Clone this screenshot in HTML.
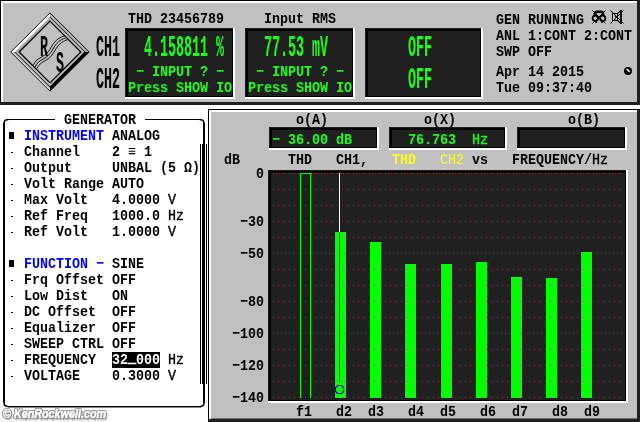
<!DOCTYPE html>
<html lang="en"><head><meta charset="utf-8"><title>R&amp;S Audio Analyzer</title>
<style>
html,body{margin:0;padding:0;background:#fff;}
body{width:640px;height:422px;position:relative;overflow:hidden;}
svg{position:absolute;left:0;top:0;}
#txt{position:absolute;left:0;top:0;width:640px;height:422px;will-change:transform;}
.t{position:absolute;white-space:pre;font-family:"Liberation Mono","DejaVu Sans Mono",monospace;font-size:13.33px;line-height:20px;height:20px;margin-top:-13.5px;font-weight:bold;transform:scaleY(1.13);transform-origin:0 13.5px;letter-spacing:0;}
.t u{text-decoration:none;font-weight:normal;-webkit-text-stroke:0.35px currentColor;}
.t b.hl{color:#fff;font-weight:bold;}
.t b.hl i{font-style:normal;position:relative;top:-1.6px;-webkit-text-stroke:0.7px #fff;}
.tall{transform:scaleY(2.28);}
.wm{position:absolute;left:3px;top:407px;font:italic bold 12px "Liberation Sans",sans-serif;color:#fff;-webkit-text-stroke:0.5px #fff;transform:scaleX(0.897);transform-origin:0 0;text-shadow:1px 0 0 #808080,-1px 0 0 #8a8a8a,0 1px 0 #808080,0 -1px 0 #8a8a8a,1px 1px 0 #888,-1px -1px 0 #999,1px -1px 0 #999,-1px 1px 0 #999,2px 2px 2px #999,1px 2px 2px #aaa;white-space:nowrap;}
</style></head><body>
<svg width="640" height="422" viewBox="0 0 640 422" shape-rendering="crispEdges">
<rect x="0" y="0" width="640" height="105" fill="#202020"/>
<rect x="0" y="0" width="637" height="102" fill="#000"/>
<rect x="1" y="1" width="636" height="101" fill="#fff"/>
<rect x="3" y="3" width="634" height="99" fill="#c0c0c0"/>
<rect x="125" y="28" width="110" height="71" fill="#fff"/>
<rect x="125" y="28" width="108" height="69" fill="#1c1c1c"/>
<rect x="126" y="29" width="107" height="68" fill="#000"/>
<rect x="128" y="31" width="104" height="65" fill="#202020"/>
<rect x="245" y="28" width="110" height="71" fill="#fff"/>
<rect x="245" y="28" width="108" height="69" fill="#1c1c1c"/>
<rect x="246" y="29" width="107" height="68" fill="#000"/>
<rect x="248" y="31" width="104" height="65" fill="#202020"/>
<rect x="365" y="28" width="118" height="71" fill="#fff"/>
<rect x="365" y="28" width="116" height="69" fill="#1c1c1c"/>
<rect x="366" y="29" width="115" height="68" fill="#000"/>
<rect x="368" y="31" width="112" height="65" fill="#202020"/>
<g shape-rendering="auto">
<polygon points="50,12.399999999999999 89.6,52 50,91.6 10.399999999999999,52" fill="#000"/>
<polygon points="50,13.5 88.5,52 50,90.5 11.5,52" fill="#c0c0c0"/>
<polygon points="11.399999999999999,52 50,13.399999999999999 50,17.200000000000003 15.200000000000003,52" fill="#fff"/>
<polygon points="15.200000000000003,52 50,17.200000000000003 50,20.5 18.5,52" fill="#a6a6a6"/>
<polygon points="88.9,52 50,90.9 50,86.3 84.3,52" fill="#000"/>
<polygon points="85.6,52 50,16.4 50,17.4 84.6,52" fill="#000"/>
<polygon points="14.399999999999999,52 50,87.6 50,86.6 15.399999999999999,52" fill="#000"/>
<polygon points="11.600000000000001,52 50,90.4 50,89.4 12.600000000000001,52" fill="#e8e8e8"/>
<polygon points="50,21.1 80.9,52 50,82.9 19.1,52" fill="#c0c0c0" stroke="#000" stroke-width="1.3"/>
</g>
<path d="M33.2,65.2 C35.2,60.7 38.2,58.7 42.2,56.7 C46.2,54.7 48.7,51.7 51.2,47.2 C54.2,41.7 58.2,37.7 63.7,36.2" fill="none" stroke="#000" stroke-width="0.9" shape-rendering="auto"/>
<path d="M35,67 C37,62.5 40,60.5 44,58.5 C48,56.5 50.5,53.5 53,49 C56,43.5 60,39.5 65.5,38" fill="none" stroke="#000" stroke-width="0.9" shape-rendering="auto"/>
<path d="M36.8,68.8 C38.8,64.3 41.8,62.3 45.8,60.3 C49.8,58.3 52.3,55.3 54.8,50.8 C57.8,45.3 61.8,41.3 67.3,39.8" fill="none" stroke="#000" stroke-width="0.9" shape-rendering="auto"/>
<g stroke="#000" stroke-width="1" fill="none" shape-rendering="auto"><path d="M592.5,10.5 L605.5,23.5 M605.5,10.5 L592.5,23.5"/><path d="M594.8,16 L594.8,14 Q595,11.8 597.5,11.8 L600.5,11.8 Q603,11.8 603.2,14 L603.2,16" stroke-width="2.4"/><circle cx="595.3" cy="18.3" r="2.7" stroke-width="1.7"/><circle cx="602.7" cy="18.3" r="2.7" stroke-width="1.7"/><path d="M595.5,21 l1,1.8 M602.5,21 l-1,1.8" stroke-width="1.6"/><rect x="598.3" y="16.3" width="1.6" height="1.6" fill="#000" stroke="none"/><path d="M610.5,10.5 L623.5,23.5 M623.5,10.5 L610.5,23.5"/><rect x="612.5" y="13.5" width="5" height="7" stroke-width="1"/><path d="M617.5,13.5 L621,10.5 M617.5,20.5 L621,23.5" stroke-width="1.1"/><path d="M621,10 V24" stroke-width="1.8"/><rect x="615" y="16" width="1.6" height="1.6" fill="#000" stroke="none"/></g>
<g shape-rendering="auto"><circle cx="628" cy="71" r="4" fill="#000"/><path d="M626.6,68.8 l3.2,3.2" stroke="#e8e8e8" stroke-width="1.7"/></g>
<rect x="3" y="123" width="2" height="280" fill="#000"/>
<rect x="203" y="123" width="2" height="280" fill="#000"/>
<rect x="8" y="119" width="47" height="1" fill="#000"/>
<rect x="145" y="119" width="56" height="1" fill="#000"/>
<rect x="8" y="406" width="193" height="1" fill="#000"/>
<rect x="8" y="407" width="193" height="1" fill="#8a8a8a"/>
<g fill="none" stroke="#000" stroke-width="1.5" shape-rendering="auto"><path d="M4,123.5 Q4,119.6 8.5,119.6"/><path d="M199.5,119.6 Q204,119.6 204,123.5"/><path d="M4,402.5 Q4,406.6 8.5,406.6"/><path d="M199.5,406.6 Q204,406.6 204,402.5"/></g>
<rect x="9" y="132" width="5" height="7" fill="#000"/>
<rect x="11" y="152" width="2" height="1" fill="#000"/>
<rect x="11" y="168" width="2" height="1" fill="#000"/>
<rect x="11" y="184" width="2" height="1" fill="#000"/>
<rect x="11" y="200" width="2" height="1" fill="#000"/>
<rect x="11" y="216" width="2" height="1" fill="#000"/>
<rect x="11" y="232" width="2" height="1" fill="#000"/>
<rect x="9" y="260" width="5" height="7" fill="#000"/>
<rect x="11" y="280" width="2" height="1" fill="#000"/>
<rect x="11" y="296" width="2" height="1" fill="#000"/>
<rect x="11" y="312" width="2" height="1" fill="#000"/>
<rect x="11" y="328" width="2" height="1" fill="#000"/>
<rect x="11" y="344" width="2" height="1" fill="#000"/>
<rect x="11" y="360" width="2" height="1" fill="#000"/>
<rect x="11" y="376" width="2" height="1" fill="#000"/>
<rect x="200" y="144" width="1" height="240" fill="#000"/>
<rect x="202" y="144" width="3" height="240" fill="#000"/>
<rect x="206" y="144" width="1" height="240" fill="#000"/>
<rect x="112" y="352" width="48" height="16" fill="#000"/>
<rect x="208" y="109" width="432" height="313" fill="#202020"/>
<rect x="208" y="109" width="1" height="313" fill="#000"/>
<rect x="208" y="109" width="431" height="1" fill="#000"/>
<rect x="209" y="110" width="428" height="309" fill="#fff"/>
<rect x="211" y="112" width="426" height="306" fill="#c0c0c0"/>
<rect x="211" y="418" width="426" height="1" fill="#707070"/>
<rect x="269" y="127" width="110" height="23" fill="#fff"/>
<rect x="269" y="127" width="108" height="21" fill="#1c1c1c"/>
<rect x="270" y="128" width="107" height="20" fill="#000"/>
<rect x="272" y="130" width="104" height="17" fill="#202020"/>
<rect x="389" y="127" width="118" height="23" fill="#fff"/>
<rect x="389" y="127" width="116" height="21" fill="#1c1c1c"/>
<rect x="390" y="128" width="115" height="20" fill="#000"/>
<rect x="392" y="130" width="112" height="17" fill="#202020"/>
<rect x="517" y="127" width="110" height="23" fill="#fff"/>
<rect x="517" y="127" width="108" height="21" fill="#1c1c1c"/>
<rect x="518" y="128" width="107" height="20" fill="#000"/>
<rect x="520" y="130" width="104" height="17" fill="#202020"/>
<rect x="268" y="170" width="360" height="233" fill="#fff"/>
<rect x="268" y="170" width="358" height="231" fill="#1c1c1c"/>
<rect x="269" y="171" width="357" height="230" fill="#000"/>
<rect x="271" y="173" width="354" height="227" fill="#202020"/>
<defs><pattern id="pa" x="273" y="0" width="16" height="1" patternUnits="userSpaceOnUse"><rect x="0" width="1" height="1" fill="#f00"/><rect x="5" width="1" height="1" fill="#f00"/><rect x="10" width="1" height="1" fill="#f00"/></pattern><pattern id="pb" x="273" y="0" width="16" height="1" patternUnits="userSpaceOnUse"><rect x="0" width="1" height="1" fill="#f00"/><rect x="4" width="1" height="1" fill="#f00"/><rect x="8" width="1" height="1" fill="#f00"/><rect x="12" width="1" height="1" fill="#f00"/></pattern><pattern id="pc" x="273" y="0" width="16" height="1" patternUnits="userSpaceOnUse"><rect x="0" width="1" height="1" fill="#f00"/><rect x="3" width="1" height="1" fill="#f00"/><rect x="6" width="1" height="1" fill="#f00"/><rect x="9" width="1" height="1" fill="#f00"/><rect x="12" width="1" height="1" fill="#f00"/></pattern><pattern id="ma" x="273" y="0" width="16" height="1" patternUnits="userSpaceOnUse"><rect x="0" width="1" height="1" fill="#e838e8"/><rect x="5" width="1" height="1" fill="#e838e8"/><rect x="10" width="1" height="1" fill="#e838e8"/></pattern><pattern id="mb" x="273" y="0" width="16" height="1" patternUnits="userSpaceOnUse"><rect x="0" width="1" height="1" fill="#e838e8"/><rect x="4" width="1" height="1" fill="#e838e8"/><rect x="8" width="1" height="1" fill="#e838e8"/><rect x="12" width="1" height="1" fill="#e838e8"/></pattern></defs>
<rect x="273" y="173" width="351" height="1" fill="url(#pc)"/>
<rect x="273" y="189" width="351" height="1" fill="url(#pa)"/>
<rect x="273" y="205" width="351" height="1" fill="url(#pa)"/>
<rect x="273" y="221" width="351" height="1" fill="url(#pa)"/>
<rect x="273" y="237" width="351" height="1" fill="url(#pa)"/>
<rect x="273" y="253" width="351" height="1" fill="url(#pb)"/>
<rect x="273" y="269" width="351" height="1" fill="url(#pa)"/>
<rect x="273" y="285" width="351" height="1" fill="url(#pa)"/>
<rect x="273" y="301" width="351" height="1" fill="url(#pa)"/>
<rect x="273" y="317" width="351" height="1" fill="url(#pa)"/>
<rect x="273" y="333" width="351" height="1" fill="url(#pb)"/>
<rect x="273" y="349" width="351" height="1" fill="url(#pa)"/>
<rect x="273" y="365" width="351" height="1" fill="url(#pa)"/>
<rect x="273" y="381" width="351" height="1" fill="url(#pa)"/>
<rect x="273" y="397" width="351" height="1" fill="url(#pa)"/>
<rect x="335" y="232" width="11" height="166" fill="#00ff00"/>
<rect x="370" y="242" width="11" height="156" fill="#00ff00"/>
<rect x="405" y="264" width="11" height="134" fill="#00ff00"/>
<rect x="441" y="264" width="11" height="134" fill="#00ff00"/>
<rect x="476" y="262" width="11" height="136" fill="#00ff00"/>
<rect x="511" y="277" width="11" height="121" fill="#00ff00"/>
<rect x="546" y="278" width="11" height="120" fill="#00ff00"/>
<rect x="581" y="252" width="11" height="146" fill="#00ff00"/>
<rect x="335" y="237" width="11" height="1" fill="url(#ma)"/>
<rect x="335" y="253" width="11" height="1" fill="url(#mb)"/>
<rect x="335" y="269" width="11" height="1" fill="url(#ma)"/>
<rect x="335" y="285" width="11" height="1" fill="url(#ma)"/>
<rect x="335" y="301" width="11" height="1" fill="url(#ma)"/>
<rect x="335" y="317" width="11" height="1" fill="url(#ma)"/>
<rect x="335" y="333" width="11" height="1" fill="url(#mb)"/>
<rect x="335" y="349" width="11" height="1" fill="url(#ma)"/>
<rect x="335" y="365" width="11" height="1" fill="url(#ma)"/>
<rect x="335" y="381" width="11" height="1" fill="url(#ma)"/>
<rect x="335" y="397" width="11" height="1" fill="url(#ma)"/>
<rect x="370" y="253" width="11" height="1" fill="url(#mb)"/>
<rect x="370" y="269" width="11" height="1" fill="url(#ma)"/>
<rect x="370" y="285" width="11" height="1" fill="url(#ma)"/>
<rect x="370" y="301" width="11" height="1" fill="url(#ma)"/>
<rect x="370" y="317" width="11" height="1" fill="url(#ma)"/>
<rect x="370" y="333" width="11" height="1" fill="url(#mb)"/>
<rect x="370" y="349" width="11" height="1" fill="url(#ma)"/>
<rect x="370" y="365" width="11" height="1" fill="url(#ma)"/>
<rect x="370" y="381" width="11" height="1" fill="url(#ma)"/>
<rect x="370" y="397" width="11" height="1" fill="url(#ma)"/>
<rect x="405" y="269" width="11" height="1" fill="url(#ma)"/>
<rect x="405" y="285" width="11" height="1" fill="url(#ma)"/>
<rect x="405" y="301" width="11" height="1" fill="url(#ma)"/>
<rect x="405" y="317" width="11" height="1" fill="url(#ma)"/>
<rect x="405" y="333" width="11" height="1" fill="url(#mb)"/>
<rect x="405" y="349" width="11" height="1" fill="url(#ma)"/>
<rect x="405" y="365" width="11" height="1" fill="url(#ma)"/>
<rect x="405" y="381" width="11" height="1" fill="url(#ma)"/>
<rect x="405" y="397" width="11" height="1" fill="url(#ma)"/>
<rect x="441" y="269" width="11" height="1" fill="url(#ma)"/>
<rect x="441" y="285" width="11" height="1" fill="url(#ma)"/>
<rect x="441" y="301" width="11" height="1" fill="url(#ma)"/>
<rect x="441" y="317" width="11" height="1" fill="url(#ma)"/>
<rect x="441" y="333" width="11" height="1" fill="url(#mb)"/>
<rect x="441" y="349" width="11" height="1" fill="url(#ma)"/>
<rect x="441" y="365" width="11" height="1" fill="url(#ma)"/>
<rect x="441" y="381" width="11" height="1" fill="url(#ma)"/>
<rect x="441" y="397" width="11" height="1" fill="url(#ma)"/>
<rect x="476" y="269" width="11" height="1" fill="url(#ma)"/>
<rect x="476" y="285" width="11" height="1" fill="url(#ma)"/>
<rect x="476" y="301" width="11" height="1" fill="url(#ma)"/>
<rect x="476" y="317" width="11" height="1" fill="url(#ma)"/>
<rect x="476" y="333" width="11" height="1" fill="url(#mb)"/>
<rect x="476" y="349" width="11" height="1" fill="url(#ma)"/>
<rect x="476" y="365" width="11" height="1" fill="url(#ma)"/>
<rect x="476" y="381" width="11" height="1" fill="url(#ma)"/>
<rect x="476" y="397" width="11" height="1" fill="url(#ma)"/>
<rect x="511" y="285" width="11" height="1" fill="url(#ma)"/>
<rect x="511" y="301" width="11" height="1" fill="url(#ma)"/>
<rect x="511" y="317" width="11" height="1" fill="url(#ma)"/>
<rect x="511" y="333" width="11" height="1" fill="url(#mb)"/>
<rect x="511" y="349" width="11" height="1" fill="url(#ma)"/>
<rect x="511" y="365" width="11" height="1" fill="url(#ma)"/>
<rect x="511" y="381" width="11" height="1" fill="url(#ma)"/>
<rect x="511" y="397" width="11" height="1" fill="url(#ma)"/>
<rect x="546" y="285" width="11" height="1" fill="url(#ma)"/>
<rect x="546" y="301" width="11" height="1" fill="url(#ma)"/>
<rect x="546" y="317" width="11" height="1" fill="url(#ma)"/>
<rect x="546" y="333" width="11" height="1" fill="url(#mb)"/>
<rect x="546" y="349" width="11" height="1" fill="url(#ma)"/>
<rect x="546" y="365" width="11" height="1" fill="url(#ma)"/>
<rect x="546" y="381" width="11" height="1" fill="url(#ma)"/>
<rect x="546" y="397" width="11" height="1" fill="url(#ma)"/>
<rect x="581" y="253" width="11" height="1" fill="url(#mb)"/>
<rect x="581" y="269" width="11" height="1" fill="url(#ma)"/>
<rect x="581" y="285" width="11" height="1" fill="url(#ma)"/>
<rect x="581" y="301" width="11" height="1" fill="url(#ma)"/>
<rect x="581" y="317" width="11" height="1" fill="url(#ma)"/>
<rect x="581" y="333" width="11" height="1" fill="url(#mb)"/>
<rect x="581" y="349" width="11" height="1" fill="url(#ma)"/>
<rect x="581" y="365" width="11" height="1" fill="url(#ma)"/>
<rect x="581" y="381" width="11" height="1" fill="url(#ma)"/>
<rect x="581" y="397" width="11" height="1" fill="url(#ma)"/>
<rect x="300" y="173" width="1" height="225" fill="#00ff00"/>
<rect x="310" y="173" width="1" height="225" fill="#00ff00"/>
<rect x="300" y="173" width="11" height="1" fill="#00ff00"/>
<rect x="339" y="173" width="1" height="59" fill="#fff"/>
<rect x="339" y="232" width="1" height="150" fill="#0000e8"/>
<polygon points="337.5,385.5 341.5,385.5 343.5,387.5 343.5,391.5 341.5,393.5 337.5,393.5 335.5,391.5 335.5,387.5" fill="none" stroke="#0000e8" stroke-width="1.2" shape-rendering="auto"/>
</svg>
<div id="txt">
<div class="t" style="left:128px;top:23px;color:#000;font-weight:bold;">THD&nbsp;23456789</div>
<div class="t" style="left:264px;top:23px;color:#000;font-weight:bold;">Input&nbsp;RMS</div>
<div class="t" style="left:496px;top:24px;color:#000;font-weight:bold;">GEN&nbsp;RUNNING</div>
<div class="t" style="left:496px;top:40px;color:#000;font-weight:bold;">ANL&nbsp;1:CONT&nbsp;2:CONT</div>
<div class="t" style="left:496px;top:56px;color:#000;font-weight:bold;">SWP&nbsp;OFF</div>
<div class="t" style="left:496px;top:76px;color:#000;font-weight:bold;">Apr&nbsp;14&nbsp;2015</div>
<div class="t" style="left:496px;top:92px;color:#000;font-weight:bold;">Tue&nbsp;09:37:40</div>
<div class="t" style="left:128px;top:76px;color:#18ff18;font-weight:bold;">&nbsp;−&nbsp;INPUT&nbsp;?&nbsp;−</div>
<div class="t" style="left:128px;top:92px;color:#18ff18;font-weight:bold;">Press&nbsp;SHOW&nbsp;IO</div>
<div class="t" style="left:248px;top:76px;color:#18ff18;font-weight:bold;">&nbsp;−&nbsp;INPUT&nbsp;?&nbsp;−</div>
<div class="t" style="left:248px;top:92px;color:#18ff18;font-weight:bold;">Press&nbsp;SHOW&nbsp;IO</div>
<div class="t tall" style="left:96px;top:57px;color:#000;font-weight:bold;">CH1</div>
<div class="t tall" style="left:96px;top:89px;color:#000;font-weight:bold;">CH2</div>
<div class="t tall" style="left:144px;top:57px;color:#18ff18;font-weight:bold;">4.158811&nbsp;%</div>
<div class="t tall" style="left:264px;top:57px;color:#18ff18;font-weight:bold;">77.53&nbsp;mV</div>
<div class="t tall" style="left:408px;top:57px;color:#18ff18;font-weight:bold;">OFF</div>
<div class="t tall" style="left:408px;top:89px;color:#18ff18;font-weight:bold;">OFF</div>
<div class="t tall" style="left:40px;top:57px;color:#000;font-weight:bold;">R</div>
<div class="t tall" style="left:56px;top:73px;color:#000;font-weight:bold;">S</div>
<div class="t" style="left:64px;top:124px;color:#000;font-weight:bold;">GENERATOR</div>
<div class="t" style="left:24px;top:140px;color:#0000ff;font-weight:bold;">INSTRUMENT</div>
<div class="t" style="left:112px;top:140px;">ANALOG</div>
<div class="t" style="left:24px;top:156px;color:#000;font-weight:bold;">Channel</div>
<div class="t" style="left:112px;top:156px;">2&nbsp;≡&nbsp;1</div>
<div class="t" style="left:24px;top:172px;color:#000;font-weight:bold;">Output</div>
<div class="t" style="left:112px;top:172px;">UNBAL&nbsp;(5&nbsp;Ω)</div>
<div class="t" style="left:24px;top:188px;color:#000;font-weight:bold;">Volt&nbsp;Range</div>
<div class="t" style="left:112px;top:188px;">AUTO</div>
<div class="t" style="left:24px;top:204px;color:#000;font-weight:bold;">Max&nbsp;Volt</div>
<div class="t" style="left:112px;top:204px;">4.0000&nbsp;<u>V</u></div>
<div class="t" style="left:24px;top:220px;color:#000;font-weight:bold;">Ref&nbsp;Freq</div>
<div class="t" style="left:112px;top:220px;">1000.0&nbsp;<u>Hz</u></div>
<div class="t" style="left:24px;top:236px;color:#000;font-weight:bold;">Ref&nbsp;Volt</div>
<div class="t" style="left:112px;top:236px;">1.0000&nbsp;<u>V</u></div>
<div class="t" style="left:24px;top:268px;color:#0000ff;font-weight:bold;">FUNCTION&nbsp;−</div>
<div class="t" style="left:112px;top:268px;">SINE</div>
<div class="t" style="left:24px;top:284px;color:#000;font-weight:bold;">Frq&nbsp;Offset</div>
<div class="t" style="left:112px;top:284px;">OFF</div>
<div class="t" style="left:24px;top:300px;color:#000;font-weight:bold;">Low&nbsp;Dist</div>
<div class="t" style="left:112px;top:300px;">ON</div>
<div class="t" style="left:24px;top:316px;color:#000;font-weight:bold;">DC&nbsp;Offset</div>
<div class="t" style="left:112px;top:316px;">OFF</div>
<div class="t" style="left:24px;top:332px;color:#000;font-weight:bold;">Equalizer</div>
<div class="t" style="left:112px;top:332px;">OFF</div>
<div class="t" style="left:24px;top:348px;color:#000;font-weight:bold;">SWEEP&nbsp;CTRL</div>
<div class="t" style="left:112px;top:348px;">OFF</div>
<div class="t" style="left:24px;top:364px;color:#000;font-weight:bold;">FREQUENCY</div>
<div class="t" style="left:112px;top:364px;"><b class="hl">32<i>_</i>000</b>&nbsp;<u>Hz</u></div>
<div class="t" style="left:24px;top:380px;color:#000;font-weight:bold;">VOLTAGE</div>
<div class="t" style="left:112px;top:380px;">0.3000&nbsp;<u>V</u></div>
<div class="t" style="left:296px;top:124px;color:#000;font-weight:bold;">o(A)</div>
<div class="t" style="left:424px;top:124px;color:#000;font-weight:bold;">o(X)</div>
<div class="t" style="left:568px;top:124px;color:#000;font-weight:bold;">o(B)</div>
<div class="t" style="left:272px;top:144px;color:#18ff18;font-weight:bold;">−&nbsp;36.00&nbsp;dB</div>
<div class="t" style="left:408px;top:144px;color:#18ff18">76.763&nbsp;&nbsp;<u>Hz</u></div>
<div class="t" style="left:224px;top:164px;color:#000;font-weight:bold;">dB</div>
<div class="t" style="left:288px;top:164px;color:#000;font-weight:bold;">THD</div>
<div class="t" style="left:336px;top:164px;color:#000;font-weight:bold;">CH1,</div>
<div class="t" style="left:392px;top:164px;color:#ffff20;font-weight:bold;">THD</div>
<div class="t" style="left:440px;top:164px;color:#ffff20;font-weight:normal;">CH2</div>
<div class="t" style="left:472px;top:164px;color:#000;font-weight:bold;">vs</div>
<div class="t" style="left:512px;top:164px;">FREQUENCY/<u>Hz</u></div>
<div class="t" style="left:256px;top:178px;color:#000;font-weight:bold;">0</div>
<div class="t" style="left:240px;top:226px;color:#000;font-weight:bold;">−30</div>
<div class="t" style="left:240px;top:258px;color:#000;font-weight:bold;">−50</div>
<div class="t" style="left:240px;top:306px;color:#000;font-weight:bold;">−80</div>
<div class="t" style="left:232px;top:338px;color:#000;font-weight:bold;">−100</div>
<div class="t" style="left:232px;top:370px;color:#000;font-weight:bold;">−120</div>
<div class="t" style="left:232px;top:402px;color:#000;font-weight:bold;">−140</div>
<div class="t" style="left:296px;top:416px;color:#000;font-weight:bold;">f1</div>
<div class="t" style="left:336px;top:416px;color:#000;font-weight:bold;">d2</div>
<div class="t" style="left:368px;top:416px;color:#000;font-weight:bold;">d3</div>
<div class="t" style="left:408px;top:416px;color:#000;font-weight:bold;">d4</div>
<div class="t" style="left:440px;top:416px;color:#000;font-weight:bold;">d5</div>
<div class="t" style="left:480px;top:416px;color:#000;font-weight:bold;">d6</div>
<div class="t" style="left:512px;top:416px;color:#000;font-weight:bold;">d7</div>
<div class="t" style="left:552px;top:416px;color:#000;font-weight:bold;">d8</div>
<div class="t" style="left:584px;top:416px;color:#000;font-weight:bold;">d9</div>
<div class="wm">© KenRockwell.com</div>
</div>
</body></html>
